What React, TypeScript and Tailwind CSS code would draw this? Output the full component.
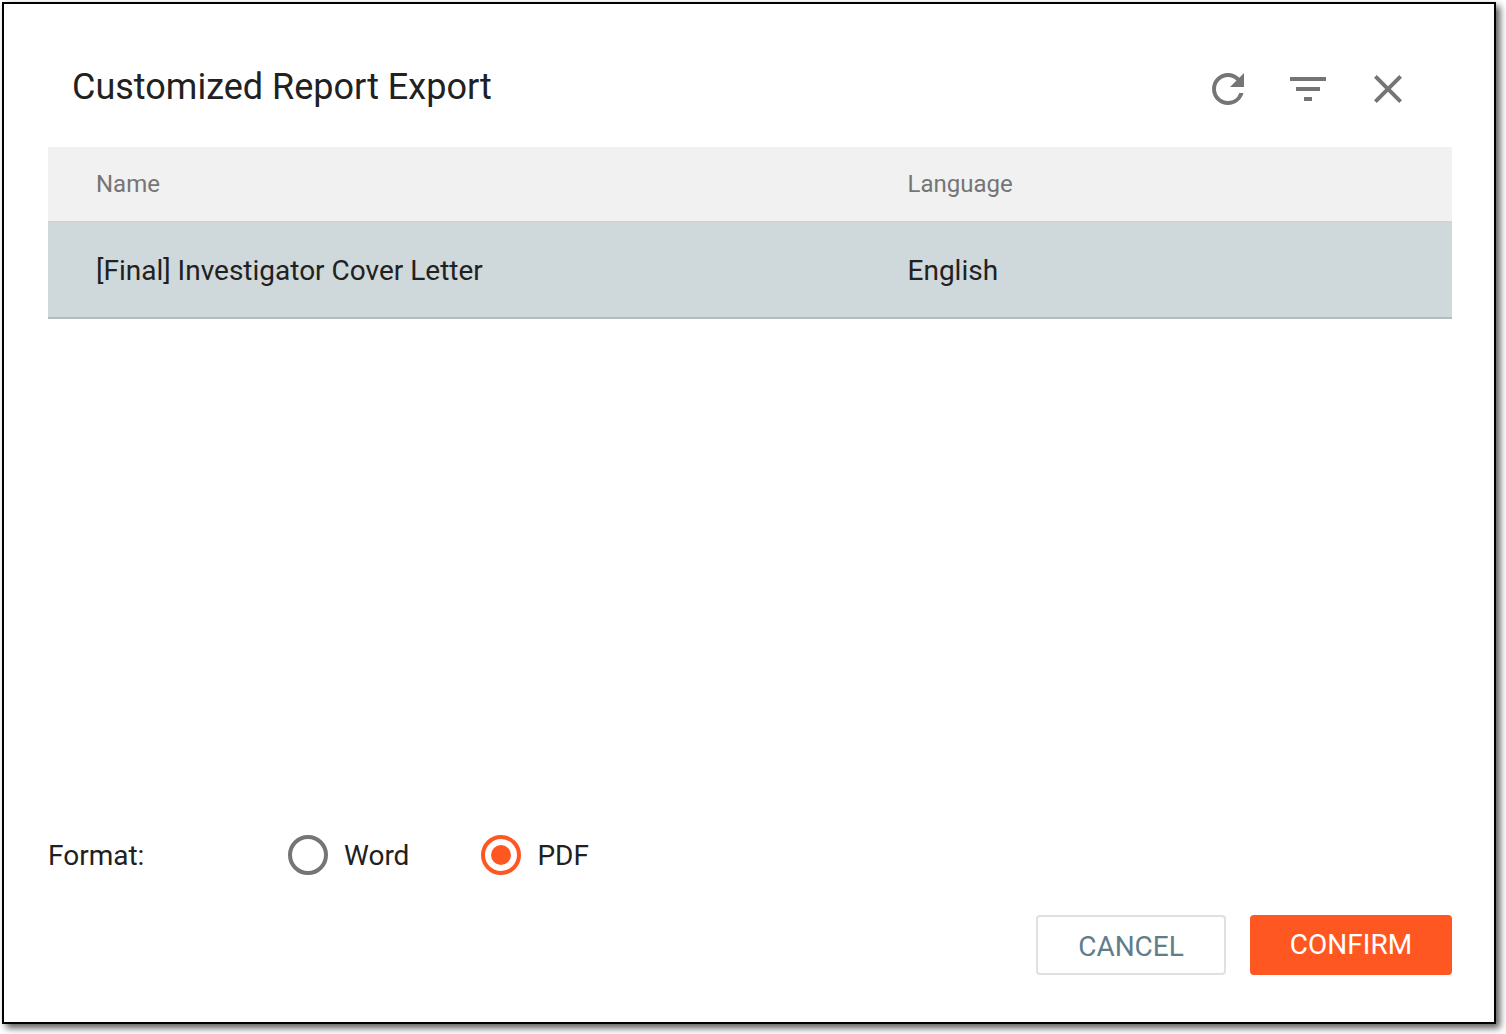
import { useState } from 'react'
import type { ReactNode } from 'react'
import { MdClose, MdFilterList, MdRefresh } from 'react-icons/md'

type Report = {
  id: number
  name: string
  language: string
}

const reports: Report[] = [{ id: 1, name: '[Final] Investigator Cover Letter', language: 'English' }]

const formats = ['Word', 'PDF']

function IconButton({ label, children }: { label: string; children: ReactNode }) {
  return (
    <button type="button" aria-label={label} className="size-12 text-[#757575]">
      {children}
    </button>
  )
}

type RadioProps = {
  label: string
  checked: boolean
  onChange: () => void
}

function Radio({ label, checked, onChange }: RadioProps) {
  return (
    <button type="button" role="radio" aria-checked={checked} onClick={onChange} className="flex items-center gap-4">
      <span
        className={`flex size-10 items-center justify-center rounded-full border-4 ${
          checked ? 'border-[#ff5722]' : 'border-[#757575]'
        }`}
      >
        {checked ? <span className="size-5 rounded-full bg-[#ff5722]" /> : null}
      </span>
      <span className="pt-0.5">{label}</span>
    </button>
  )
}

export default function App() {
  const [selected, setSelected] = useState(1)
  const [format, setFormat] = useState('PDF')

  return (
    <div className="h-[1034px] w-[1506px] overflow-hidden bg-white pt-0.5 pl-0.5 font-['Roboto',sans-serif] text-[28px] leading-8 text-[#212121]">
      <div className="flex h-[1022px] w-[1494px] flex-col border-2 border-black bg-white pr-[42px] pb-[47px] pl-11 shadow-[4px_4px_7px_rgba(0,0,0,0.65)]">
        <header className="flex h-[143px] shrink-0 items-start justify-between pt-[61px] pr-10 pl-6">
          <h1 className="text-[36px] leading-[44px]">Customized Report Export</h1>
          <div className="flex gap-8">
            <IconButton label="Refresh">
              <MdRefresh className="size-12" />
            </IconButton>
            <IconButton label="Filter">
              <MdFilterList className="size-12" />
            </IconButton>
            <IconButton label="Close">
              <MdClose className="size-12" />
            </IconButton>
          </div>
        </header>

        <div className="flex-1">
          <div className="grid h-[76px] grid-cols-[811.5px_1fr] items-center border-b-2 border-[#d0d4d5] bg-[#f1f1f1] px-12 text-2xl text-[#757575]">
            <span>Name</span>
            <span>Language</span>
          </div>
          {reports.map((report) => (
            <div
              key={report.id}
              onClick={() => setSelected(report.id)}
              className={`grid h-24 cursor-pointer grid-cols-[811.5px_1fr] items-center border-b-2 px-12 pt-0.5 ${
                selected === report.id ? 'border-[#b2bdc0] bg-[#cfd8da]' : 'border-[#e0e0e0] bg-white'
              }`}
            >
              <span>{report.name}</span>
              <span>{report.language}</span>
            </div>
          ))}
        </div>

        <div className="mb-10 flex items-center">
          <span className="w-60 pt-0.5">Format:</span>
          <div role="radiogroup" className="flex gap-[72px]">
            {formats.map((f) => (
              <Radio key={f} label={f} checked={format === f} onChange={() => setFormat(f)} />
            ))}
          </div>
        </div>

        <footer className="flex justify-end gap-6">
          <button
            type="button"
            className="h-[60px] w-[190px] rounded-[4px] border-2 border-[#e0e0e0] pt-1 text-[#607d8b]"
          >
            CANCEL
          </button>
          <button type="button" className="h-[60px] w-[202px] rounded-[4px] bg-[#ff5722] text-white">
            CONFIRM
          </button>
        </footer>
      </div>
    </div>
  )
}
